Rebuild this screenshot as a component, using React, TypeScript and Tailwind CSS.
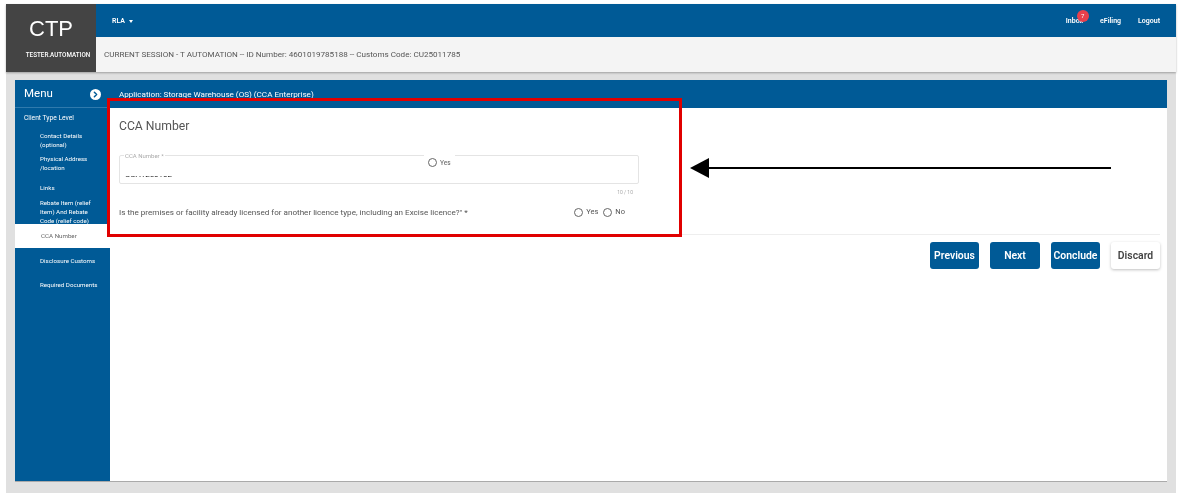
import { ChevronRight } from "lucide-react";

const sideItems = [
  { label: "Contact Details (optional)", h: "h-[18px] mt-[9px]" },
  { label: "Physical Address /location", h: "h-[18px] mt-[5px]" },
  { label: "Links", h: "h-[9px] mt-[11px]" },
  { label: "Rebate Item (relief Item) And Rebate Code (relief code)", h: "h-[25px] mt-[6px]" },
];

function Radio({ label, className = "" }: { label: string; className?: string }) {
  return (
    <span className={`flex items-center gap-[3px] ${className}`}>
      <span className="h-[9px] w-[9px] rounded-full border border-[#666] bg-white" />
      <span>{label}</span>
    </span>
  );
}

function Sidebar() {
  return (
    <aside className="w-[95px] shrink-0 bg-[#005a96] text-white">
      <div className="flex h-[28px] items-center justify-between border-b border-[#2f7aad] pl-[9px] pr-[9px] pt-[1px]">
        <span className="text-[11.5px]">Menu</span>
        <span className="flex h-[11px] w-[11px] items-center justify-center rounded-full bg-white">
          <ChevronRight className="h-[9px] w-[9px] text-[#005a96]" strokeWidth={4} />
        </span>
      </div>
      <div className="pt-[6px] text-[6.2px] leading-[9px]">
        <div className="h-[9px] pl-[9px] text-[6.7px]">Client Type Level</div>
        {sideItems.map((item) => (
          <div key={item.label} className={`pl-[25px] pr-[10px] ${item.h}`}>
            {item.label}
          </div>
        ))}
        <div className="flex h-[24px] items-center bg-white pl-[26px] text-[#666]">CCA Number</div>
        <div className="flex h-[26px] items-center pl-[25px]">Disclosure Customs</div>
        <div className="flex h-[22px] items-center pl-[25px]">Required Documents</div>
      </div>
    </aside>
  );
}

function FormPanel() {
  return (
    <main className="flex min-w-0 flex-1 flex-col bg-white text-[#555]">
      <div className="flex h-[28px] items-center bg-[#005a96] pl-[9px] pt-[1px] text-[8.1px] text-white">
        Application: Storage Warehouse (OS) (CCA Enterprise)
      </div>
      <div className="pl-[9px] pr-[7px]">
        <h2 className="mt-[11px] text-[12.2px] leading-[14px] font-normal">CCA Number</h2>
        <div className="relative mt-[22px] h-[29px] w-[520px] rounded-[2px] border border-[#e4e4e4] pl-[5px] pt-[20px]">
          <span className="absolute -top-[3px] left-[4px] bg-white px-[1px] text-[6px] leading-[5px] text-[#aaa]">
            CCA Number *
          </span>
          <span className="block h-[3px] overflow-hidden">
            <span className="-mt-[5px] block text-[8px] leading-[8px] text-[#222]">CCA1250102</span>
          </span>
          <Radio
            label="Yes"
            className="absolute -top-[1px] left-[304px] bg-white px-[4px] pt-[3px] text-[6.5px] leading-[8px] font-medium text-[#777]"
          />
        </div>
        <div className="w-[520px] pt-[4px] pr-[6px] text-right text-[5px] leading-[8px] text-[#aaa]">10 / 10</div>
        <div className="mt-[10px] flex w-[520px] items-center justify-between pr-[14px] text-[8.1px] leading-[10px]">
          <span>Is the premises or facility already licensed for another licence type, including an Excise licence?" *</span>
          <span className="flex gap-[5px] pt-[1px] text-[7.5px]">
            <Radio label="Yes" />
            <Radio label="No" />
          </span>
        </div>
        <div className="mt-[17px] flex flex-col items-end">
          <div className="h-px w-full bg-[#eee]" />
          <div className="mt-[7px] flex gap-[11px] text-[10.4px] font-semibold">
            <button className="h-[27px] w-[49px] rounded-[3px] bg-[#005a96] text-white">Previous</button>
            <button className="h-[27px] w-[50px] rounded-[3px] bg-[#005a96] text-white">Next</button>
            <button className="h-[27px] w-[49px] rounded-[3px] bg-[#005a96] text-white">Conclude</button>
            <button className="h-[27px] w-[49px] rounded-[3px] bg-white text-[#444] shadow-[0_1px_3px_rgba(0,0,0,0.25)]">
              Discard
            </button>
          </div>
        </div>
      </div>
    </main>
  );
}

export default function App() {
  return (
    <div className="relative h-[493px] w-[1186px] overflow-hidden bg-white font-['Roboto',sans-serif]">
      <div className="ml-[6px] mr-[10px] mt-[4px] flex h-[489px] flex-col bg-[#e0e0e0] blur-[0.35px]">
        <header className="flex h-[68px] shrink-0 shadow-[0_1px_2px_rgba(0,0,0,0.3)]">
          <div className="flex w-[90px] shrink-0 flex-col items-center bg-[#444444] text-white">
            <div className="mt-[12px] font-['Liberation_Sans',sans-serif] text-[22px] leading-[26px]">CTP</div>
            <div className="ml-[14px] mt-[9px] text-[6.3px] leading-[8px] font-medium">TESTER.AUTOMATION</div>
          </div>
          <div className="flex min-w-0 flex-1 flex-col">
            <div className="flex h-[33px] items-center justify-between bg-[#005a96] pl-[16px] pr-[16px] pt-[1px] text-[7px] font-semibold text-white">
              <span className="flex items-center gap-[4px]">
                RLA
                <span className="h-0 w-0 border-x-[2.5px] border-t-[3px] border-x-transparent border-t-white" />
              </span>
              <span className="flex items-center">
                <span className="relative">
                  Inbox
                  <span className="absolute -top-[6px] left-[11px] flex h-[12px] w-[12px] items-center justify-center rounded-full bg-[#e8404c] text-[6px] font-normal">
                    7
                  </span>
                </span>
                <span className="ml-[17px]">eFiling</span>
                <span className="ml-[17px]">Logout</span>
              </span>
            </div>
            <div className="flex h-[35px] items-center bg-[#f4f4f4] pl-[8px] text-[8.1px] text-[#555]">
              CURRENT SESSION - T AUTOMATION -- ID Number: 4601019785188 -- Customs Code: CU25011785
            </div>
          </div>
        </header>
        <div className="mx-[9px] mt-[8px] flex h-[402px] border-b border-[#aaa]">
          <Sidebar />
          <FormPanel />
        </div>
      </div>

      {/* annotations pasted over the screenshot */}
      <div className="absolute left-[107px] top-[98px] h-[139px] w-[575px] border-[3px] border-[#e00000]" />
      <svg className="absolute left-[688px] top-[155px]" width="426" height="26" viewBox="0 0 426 26">
        <path d="M2 13 L21 3 V23 Z" fill="#000" />
        <path d="M20 13 H423" stroke="#000" strokeWidth="2" />
      </svg>
    </div>
  );
}
